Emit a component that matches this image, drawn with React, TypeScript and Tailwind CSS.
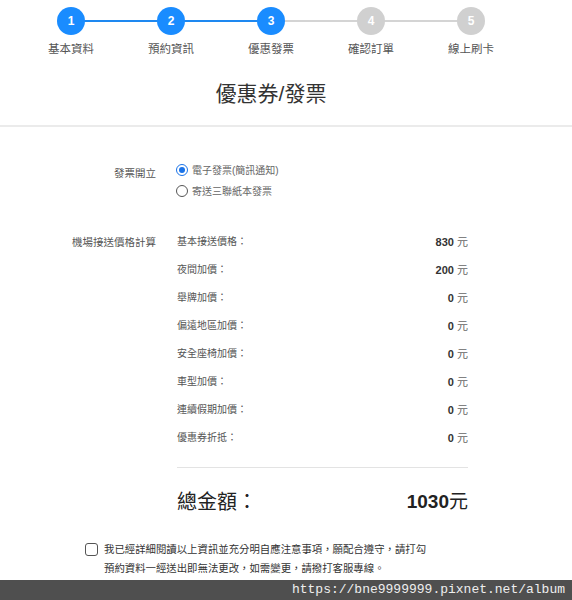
const steps = [
  { n: 1, label: '基本資料', done: true },
  { n: 2, label: '預約資訊', done: true },
  { n: 3, label: '優惠發票', done: true },
  { n: 4, label: '確認訂單', done: false },
  { n: 5, label: '線上刷卡', done: false },
];

const prices = [
  { label: '基本接送價格：', value: 830 },
  { label: '夜間加價：', value: 200 },
  { label: '舉牌加價：', value: 0 },
  { label: '偏遠地區加價：', value: 0 },
  { label: '安全座椅加價：', value: 0 },
  { label: '車型加價：', value: 0 },
  { label: '連續假期加價：', value: 0 },
  { label: '優惠券折抵：', value: 0 },
];

export default function App() {
  return (
    <div
      className="relative w-[572px] h-[600px] bg-white overflow-hidden text-[#555]"
      style={{ fontFamily: '"Liberation Sans", "Noto Sans CJK TC", sans-serif' }}
    >
      {/* steps */}
      <div className="flex pl-[21px] pt-[7px]">
        {steps.map((s, i) => (
          <div key={s.n} className="relative flex w-[100px] flex-col items-center">
            {i > 0 && (
              <div
                className={
                  'absolute top-[13px] right-1/2 w-[100px] h-[2px] ' +
                  (s.done ? 'bg-[#1e88f0]' : 'bg-[#d4d4d4]')
                }
              />
            )}
            <div
              className={
                'relative z-10 flex h-[28px] w-[28px] items-center justify-center rounded-full text-[12px] font-bold text-white ' +
                (s.done ? 'bg-[#1a8cff]' : 'bg-[#d0d0d0]')
              }
            >
              {s.n}
            </div>
            <div className="mt-[7px] text-[11.5px] leading-[14px] text-[#555]">{s.label}</div>
          </div>
        ))}
      </div>

      <h1 className="mt-[25px] w-[542px] text-center text-[21px] leading-[26px] text-[#333]">優惠券/發票</h1>

      <div className="mt-[18px] h-[2px] bg-[#ebebeb]" />

      {/* invoice */}
      <div className="mt-[35px] flex pl-[20px] text-[10.5px]">
        <div className="w-[136px] pt-[3px] text-right leading-[16px] text-[#555]">發票開立</div>
        <div className="ml-[20px] flex flex-col gap-[5px] text-[10px]">
          <label className="flex h-[16px] items-center gap-[4px]">
            <span className="flex h-[12px] w-[12px] items-center justify-center rounded-full border border-[#1a73e8]">
              <span className="h-[6px] w-[6px] rounded-full bg-[#1a73e8]" />
            </span>
            <span className="text-[#666]">電子發票(簡訊通知)</span>
          </label>
          <label className="flex h-[16px] items-center gap-[4px]">
            <span className="h-[12px] w-[12px] rounded-full border border-[#555]" />
            <span className="text-[#666]">寄送三聯紙本發票</span>
          </label>
        </div>
      </div>

      {/* price */}
      <div className="mt-[35px] flex pl-[20px] text-[10.5px]">
        <div className="w-[136px] text-right leading-[16px] text-[#555]">機場接送價格計算</div>
        <div className="ml-[21px] w-[291px] text-[10px]">
          {prices.map((p, i) => (
            <div key={i} className="flex h-[28px] items-start justify-between leading-[16px]">
              <span className="text-[#555]">{p.label}</span>
              <span className="text-[11px] text-[#666]">
                <span className="font-bold text-[#333]">{p.value}</span> 元
              </span>
            </div>
          ))}
          <div className="mt-[9px] h-[1px] bg-[#e3e3e3]" />
          <div className="mt-[22px] flex items-center justify-between leading-[24px]">
            <span className="text-[20px] text-[#222]">總金額：</span>
            <span className="text-[19px] font-bold text-[#222]">
              1030<span className="font-normal">元</span>
            </span>
          </div>
        </div>
      </div>

      {/* agree */}
      <div className="mt-[26px] flex pl-[85px] text-[10.4px] leading-[19px] text-[#333]">
        <span className="mt-[3px] h-[13px] w-[13px] rounded-[3px] border border-[#555]" />
        <div className="ml-[6px]">
          <div>我已經詳細閱讀以上資訊並充分明自應注意事項，願配合遵守，請打勾</div>
          <div>預約資料一經送出即無法更改，如需變更，請撥打客服專線。</div>
        </div>
      </div>

      {/* watermark bar */}
      <div className="absolute bottom-0 left-0 right-0 flex h-[20px] items-center justify-end bg-[#4f4f4f] pr-[7px]">
        <span className="text-[13px] leading-[20px] text-[#eee]" style={{ fontFamily: '"Liberation Mono", monospace' }}>
          https://bne9999999.pixnet.net/album
        </span>
      </div>
    </div>
  );
}
